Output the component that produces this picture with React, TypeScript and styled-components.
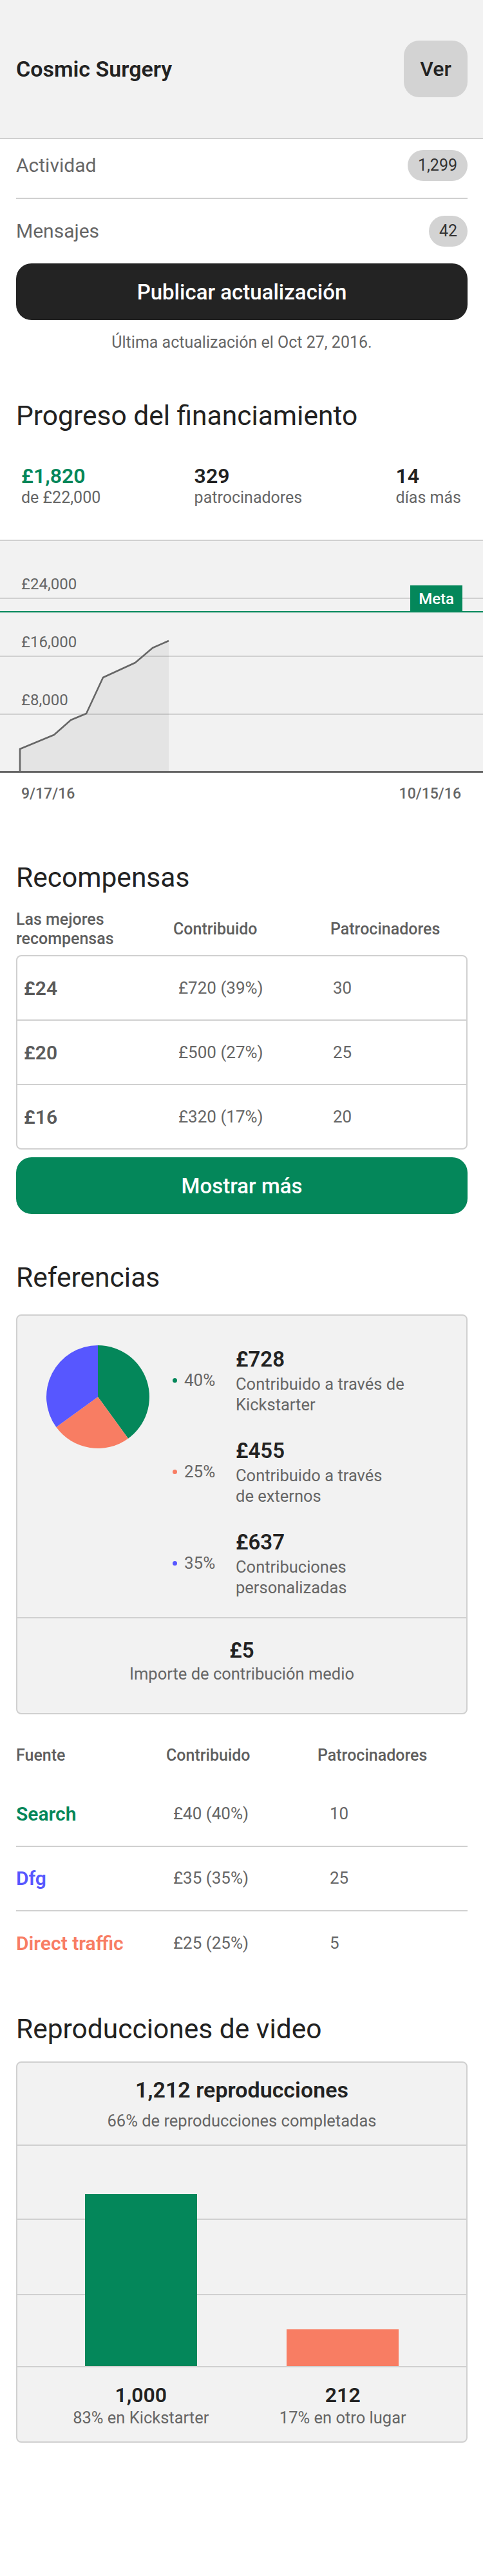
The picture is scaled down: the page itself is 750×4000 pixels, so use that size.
import React from "react";
import styled, { createGlobalStyle } from "styled-components";

const GREEN = "#04875a";
const ORANGE = "#f87d63";
const BLUE = "#5757ff";
const GRAY = "#666666";
const DARK = "#222222";
const LINE = "#d0d0d0";
const PANEL = "#f2f2f2";

const GlobalStyle = createGlobalStyle`
  * { box-sizing: border-box; }
  body {
    margin: 0;
    background: #ffffff;
    color: ${DARK};
    font-family: Roboto, "Noto Sans", Arial, sans-serif;
    -webkit-font-smoothing: antialiased;
  }
`;

const Page = styled.div`
  width: 750px;
  padding-bottom: 200px;
`;

const Header = styled.header`
  height: 216px;
  background: ${PANEL};
  border-bottom: 2px solid ${LINE};
  padding: 0 24px 0 25px;
  display: flex;
  align-items: center;
  justify-content: space-between;
`;

const ProjectName = styled.h1`
  margin: 0;
  font-size: 34px;
  font-weight: 600;
  line-height: 40px;
  color: ${DARK};
`;

const ViewButton = styled.button`
  width: 99px;
  height: 88px;
  border: none;
  border-radius: 24px;
  background: #d3d3d3;
  color: ${DARK};
  font-family: inherit;
  font-size: 32px;
  font-weight: 500;
  padding: 0;
`;

const Section = styled.section<{ $top?: number }>`
  padding: 0 24px 0 25px;
  margin-top: ${(p) => p.$top ?? 0}px;
`;

const StatList = styled.div`
  padding-top: 17px;
`;

const StatRow = styled.div`
  display: flex;
  align-items: center;
  justify-content: space-between;
  padding: 26px 0;
  border-bottom: 2px solid ${LINE};
  &:first-child {
    padding-top: 0;
  }
  &:last-child {
    border-bottom: none;
  }
`;

const StatName = styled.span`
  font-size: 30px;
  line-height: 48px;
  color: ${GRAY};
`;

const CountBadge = styled.span`
  height: 48px;
  min-width: 48px;
  padding: 0 16px;
  border-radius: 24px;
  background: #d3d3d3;
  color: #333333;
  font-size: 25px;
  line-height: 48px;
  text-align: center;
`;

const WideButton = styled.button<{ $bg: string; $top?: number }>`
  display: block;
  width: 100%;
  height: 88px;
  margin-top: ${(p) => p.$top ?? 0}px;
  border: none;
  border-radius: 24px;
  background: ${(p) => p.$bg};
  color: #ffffff;
  font-family: inherit;
  font-size: 33px;
  font-weight: 500;
`;

const UpdatedNote = styled.p`
  margin: 20px 0 0;
  text-align: center;
  font-size: 25px;
  line-height: 30px;
  color: ${GRAY};
`;

const SectionTitle = styled.h2`
  margin: 0;
  font-size: 42.5px;
  font-weight: 400;
  line-height: 51px;
  color: ${DARK};
`;

const FundingStats = styled.div`
  display: flex;
  justify-content: space-between;
  margin-top: 50px;
  padding: 0 10px 0 8px;
`;

const FundingStat = styled.div`
  display: flex;
  flex-direction: column;
`;

const FundingValue = styled.span<{ $color?: string }>`
  font-size: 32px;
  font-weight: 600;
  line-height: 36px;
  color: ${(p) => p.$color ?? DARK};
`;

const FundingLabel = styled.span`
  font-size: 25px;
  line-height: 32px;
  color: ${GRAY};
`;

const Chart = styled.div`
  position: relative;
  margin-top: 49px;
  background: ${PANEL};
  border-top: 2px solid ${LINE};
`;

const Band = styled.div<{ $axis?: boolean }>`
  height: 90px;
  display: flex;
  align-items: flex-end;
  padding: 0 0 7px 33px;
  border-bottom: ${(p) => (p.$axis ? `3px solid ${GRAY}` : `2px solid ${LINE}`)};
`;

const AxisLabel = styled.span`
  font-size: 24px;
  line-height: 28px;
  color: ${GRAY};
`;

const ChartDrawing = styled.svg`
  position: absolute;
  left: 0;
  top: 0;
  width: 750px;
  height: 360px;
`;

const GoalLine = styled.div`
  position: absolute;
  left: 0;
  right: 0;
  top: 109px;
  height: 2px;
  background: ${GREEN};
`;

const GoalTag = styled.span`
  position: absolute;
  right: 32px;
  bottom: 0;
  height: 42px;
  padding: 0 13px;
  background: ${GREEN};
  color: #ffffff;
  font-size: 24px;
  font-weight: 500;
  line-height: 42px;
`;

const DateRow = styled.div`
  display: flex;
  justify-content: space-between;
  margin-top: 19px;
  padding: 0 34px 0 33px;
  font-size: 23px;
  font-weight: 500;
  line-height: 28px;
  color: ${GRAY};
`;

const HeadGrid = styled.div<{ $cols: string; $top: number }>`
  display: grid;
  grid-template-columns: ${(p) => p.$cols};
  align-items: center;
  margin-top: ${(p) => p.$top}px;
`;

const HeadCell = styled.span`
  font-size: 25px;
  font-weight: 500;
  line-height: 30px;
  color: #5e5e5e;
`;

const RewardCard = styled.div`
  margin-top: 10px;
  border: 2px solid ${LINE};
  border-radius: 8px;
  background: #ffffff;
`;

const RewardRow = styled.div`
  display: grid;
  grid-template-columns: 240px 240px 1fr;
  align-items: center;
  height: 100px;
  padding-left: 10px;
  border-bottom: 2px solid ${LINE};
  &:last-child {
    height: 98px;
    border-bottom: none;
  }
`;

const RewardAmount = styled.span`
  font-size: 30px;
  font-weight: 600;
  color: #5a5a5a;
`;

const CellText = styled.span`
  font-size: 26px;
  color: ${GRAY};
`;

const Panel = styled.div<{ $top: number }>`
  margin-top: ${(p) => p.$top}px;
  background: ${PANEL};
  border: 2px solid ${LINE};
  border-radius: 8px;
`;

const SplitTop = styled.div`
  display: flex;
  align-items: flex-start;
  padding: 46px 0 30px 45px;
`;

const Pie = styled.svg`
  flex: none;
  width: 160px;
  height: 160px;
`;

const Legend = styled.div`
  display: flex;
  flex-direction: column;
  gap: 34px;
  margin-left: 36px;
`;

const LegendEntry = styled.div`
  display: flex;
  align-items: center;
`;

const LegendPercent = styled.div`
  flex: none;
  width: 98px;
  display: flex;
  align-items: center;
  font-size: 26px;
  color: ${GRAY};
`;

const Dot = styled.span<{ $color: string }>`
  width: 7px;
  height: 7px;
  border-radius: 50%;
  margin-right: 11px;
  background: ${(p) => p.$color};
`;

const LegendText = styled.div`
  display: flex;
  flex-direction: column;
`;

const LegendAmount = styled.span`
  font-size: 33px;
  font-weight: 600;
  line-height: 44px;
  color: ${DARK};
`;

const LegendDesc = styled.span`
  font-size: 25.5px;
  line-height: 32px;
  color: ${GRAY};
`;

const PanelFooter = styled.div`
  border-top: 2px solid ${LINE};
  padding: 30px 0 45px;
  display: flex;
  flex-direction: column;
  align-items: center;
`;

const BigFigure = styled.span`
  font-size: 33px;
  font-weight: 600;
  line-height: 40px;
  color: ${DARK};
`;

const Caption = styled.span<{ $top?: number }>`
  margin-top: ${(p) => p.$top ?? 0}px;
  font-size: 25.5px;
  line-height: 32px;
  color: ${GRAY};
`;

const SourceRows = styled.div`
  margin-top: 27px;
`;

const SourceRow = styled.div`
  display: grid;
  grid-template-columns: 244px 243px 1fr;
  align-items: center;
  height: 100px;
  padding-bottom: 2px;
  border-bottom: 2px solid ${LINE};
  &:last-child {
    border-bottom: none;
  }
`;

const SourceName = styled.span<{ $color: string }>`
  font-size: 30px;
  font-weight: 600;
  color: ${(p) => p.$color};
`;

const PanelHead = styled.div`
  padding: 22px 0 21px;
  display: flex;
  flex-direction: column;
  align-items: center;
`;

const PanelTitle = styled.span`
  font-size: 34px;
  font-weight: 600;
  line-height: 40px;
  color: ${DARK};
`;

const BarChart = styled.div`
  height: 346px;
  display: flex;
  align-items: flex-end;
  padding: 0 35px;
  border-top: 2px solid ${LINE};
  border-bottom: 2px solid ${LINE};
  background:
    linear-gradient(${LINE}, ${LINE}) 0 113px / 100% 2px no-repeat,
    linear-gradient(${LINE}, ${LINE}) 0 230px / 100% 2px no-repeat;
`;

const BarSlot = styled.div`
  flex: 1;
  display: flex;
  justify-content: center;
`;

const Bar = styled.div<{ $color: string }>`
  width: 174px;
  background: ${(p) => p.$color};
`;

const BarLabels = styled.div`
  display: flex;
  padding: 24px 35px 21px;
`;

const BarLabel = styled.div`
  flex: 1;
  display: flex;
  flex-direction: column;
  align-items: center;
`;

const BarValue = styled.span`
  font-size: 32px;
  font-weight: 600;
  line-height: 38px;
  color: ${DARK};
`;

const linePoints: [number, number][] = [
  [31, 357],
  [31, 323],
  [84, 301],
  [110, 278],
  [134, 268],
  [160, 212],
  [210, 189],
  [237, 166],
  [262, 155],
];

const referralSlices = [
  { pct: 40, color: GREEN, amount: "£728", lines: ["Contribuido a través de", "Kickstarter"] },
  { pct: 25, color: ORANGE, amount: "£455", lines: ["Contribuido a través", "de externos"] },
  { pct: 35, color: BLUE, amount: "£637", lines: ["Contribuciones", "personalizadas"] },
];

const rewards = [
  { amount: "£24", pledged: "£720 (39%)", backers: "30" },
  { amount: "£20", pledged: "£500 (27%)", backers: "25" },
  { amount: "£16", pledged: "£320 (17%)", backers: "20" },
];

const sources = [
  { name: "Search", color: GREEN, pledged: "£40 (40%)", backers: "10" },
  { name: "Dfg", color: BLUE, pledged: "£35 (35%)", backers: "25" },
  { name: "Direct traffic", color: ORANGE, pledged: "£25 (25%)", backers: "5" },
];

const plays = [
  { value: 1000, label: "1,000", caption: "83% en Kickstarter", color: GREEN },
  { value: 212, label: "212", caption: "17% en otro lugar", color: ORANGE },
];

function slicePath(r: number, from: number, to: number) {
  const a0 = from * 2 * Math.PI;
  const a1 = to * 2 * Math.PI;
  const x0 = r + r * Math.sin(a0);
  const y0 = r - r * Math.cos(a0);
  const x1 = r + r * Math.sin(a1);
  const y1 = r - r * Math.cos(a1);
  const large = to - from > 0.5 ? 1 : 0;
  return `M${r},${r} L${x0.toFixed(2)},${y0.toFixed(2)} A${r},${r} 0 ${large} 1 ${x1.toFixed(2)},${y1.toFixed(2)} Z`;
}

function PieChart() {
  let acc = 0;
  return (
    <Pie viewBox="0 0 160 160">
      {referralSlices.map((s) => {
        const from = acc / 100;
        acc += s.pct;
        return <path key={s.amount} d={slicePath(80, from, acc / 100)} fill={s.color} />;
      })}
    </Pie>
  );
}

export default function App() {
  const pts = linePoints.map(([x, y]) => `${x},${y}`).join(" ");
  const last = linePoints[linePoints.length - 1];
  const fill = `${pts} ${last[0]},357`;
  const barScale = 0.267;

  return (
    <Page>
      <GlobalStyle />
      <Header>
        <ProjectName>Cosmic Surgery</ProjectName>
        <ViewButton>Ver</ViewButton>
      </Header>

      <Section>
        <StatList>
          <StatRow>
            <StatName>Actividad</StatName>
            <CountBadge>1,299</CountBadge>
          </StatRow>
          <StatRow>
            <StatName>Mensajes</StatName>
            <CountBadge>42</CountBadge>
          </StatRow>
        </StatList>
        <WideButton $bg="#232323">Publicar actualización</WideButton>
        <UpdatedNote>Última actualización el Oct 27, 2016.</UpdatedNote>
      </Section>

      <Section $top={73}>
        <SectionTitle>Progreso del financiamiento</SectionTitle>
        <FundingStats>
          <FundingStat>
            <FundingValue $color={GREEN}>£1,820</FundingValue>
            <FundingLabel>de £22,000</FundingLabel>
          </FundingStat>
          <FundingStat>
            <FundingValue>329</FundingValue>
            <FundingLabel>patrocinadores</FundingLabel>
          </FundingStat>
          <FundingStat>
            <FundingValue>14</FundingValue>
            <FundingLabel>días más</FundingLabel>
          </FundingStat>
        </FundingStats>
      </Section>

      <Chart>
        <Band>
          <AxisLabel>£24,000</AxisLabel>
        </Band>
        <Band>
          <AxisLabel>£16,000</AxisLabel>
        </Band>
        <Band>
          <AxisLabel>£8,000</AxisLabel>
        </Band>
        <Band $axis />
        <ChartDrawing viewBox="0 0 750 360">
          <polygon points={fill} fill="rgba(0,0,0,0.055)" />
          <polyline points={pts} fill="none" stroke={GRAY} strokeWidth={2.6} strokeLinejoin="round" />
        </ChartDrawing>
        <GoalLine>
          <GoalTag>Meta</GoalTag>
        </GoalLine>
      </Chart>
      <DateRow>
        <span>9/17/16</span>
        <span>10/15/16</span>
      </DateRow>

      <Section $top={90}>
        <SectionTitle>Recompensas</SectionTitle>
        <HeadGrid $cols="244px 244px 1fr" $top={25}>
          <HeadCell>Las mejores recompensas</HeadCell>
          <HeadCell>Contribuido</HeadCell>
          <HeadCell>Patrocinadores</HeadCell>
        </HeadGrid>
        <RewardCard>
          {rewards.map((r) => (
            <RewardRow key={r.amount}>
              <RewardAmount>{r.amount}</RewardAmount>
              <CellText>{r.pledged}</CellText>
              <CellText>{r.backers}</CellText>
            </RewardRow>
          ))}
        </RewardCard>
        <WideButton $bg={GREEN} $top={12}>
          Mostrar más
        </WideButton>
      </Section>

      <Section $top={73}>
        <SectionTitle>Referencias</SectionTitle>
        <Panel $top={32}>
          <SplitTop>
            <PieChart />
            <Legend>
              {referralSlices.map((s) => (
                <LegendEntry key={s.amount}>
                  <LegendPercent>
                    <Dot $color={s.color} />
                    {s.pct}%
                  </LegendPercent>
                  <LegendText>
                    <LegendAmount>{s.amount}</LegendAmount>
                    {s.lines.map((l) => (
                      <LegendDesc key={l}>{l}</LegendDesc>
                    ))}
                  </LegendText>
                </LegendEntry>
              ))}
            </Legend>
          </SplitTop>
          <PanelFooter>
            <BigFigure>£5</BigFigure>
            <Caption>Importe de contribución medio</Caption>
          </PanelFooter>
        </Panel>
        <HeadGrid $cols="233px 235px 1fr" $top={49}>
          <HeadCell>Fuente</HeadCell>
          <HeadCell>Contribuido</HeadCell>
          <HeadCell>Patrocinadores</HeadCell>
        </HeadGrid>
        <SourceRows>
          {sources.map((s) => (
            <SourceRow key={s.name}>
              <SourceName $color={s.color}>{s.name}</SourceName>
              <CellText>{s.pledged}</CellText>
              <CellText>{s.backers}</CellText>
            </SourceRow>
          ))}
        </SourceRows>
      </Section>

      <Section $top={57}>
        <SectionTitle>Reproducciones de video</SectionTitle>
        <Panel $top={25}>
          <PanelHead>
            <PanelTitle>1,212 reproducciones</PanelTitle>
            <Caption $top={12}>66% de reproducciones completadas</Caption>
          </PanelHead>
          <BarChart>
            {plays.map((p) => (
              <BarSlot key={p.label}>
                <Bar $color={p.color} style={{ height: `${Math.round(p.value * barScale)}px` }} />
              </BarSlot>
            ))}
          </BarChart>
          <BarLabels>
            {plays.map((p) => (
              <BarLabel key={p.label}>
                <BarValue>{p.label}</BarValue>
                <Caption>{p.caption}</Caption>
              </BarLabel>
            ))}
          </BarLabels>
        </Panel>
      </Section>
    </Page>
  );
}
